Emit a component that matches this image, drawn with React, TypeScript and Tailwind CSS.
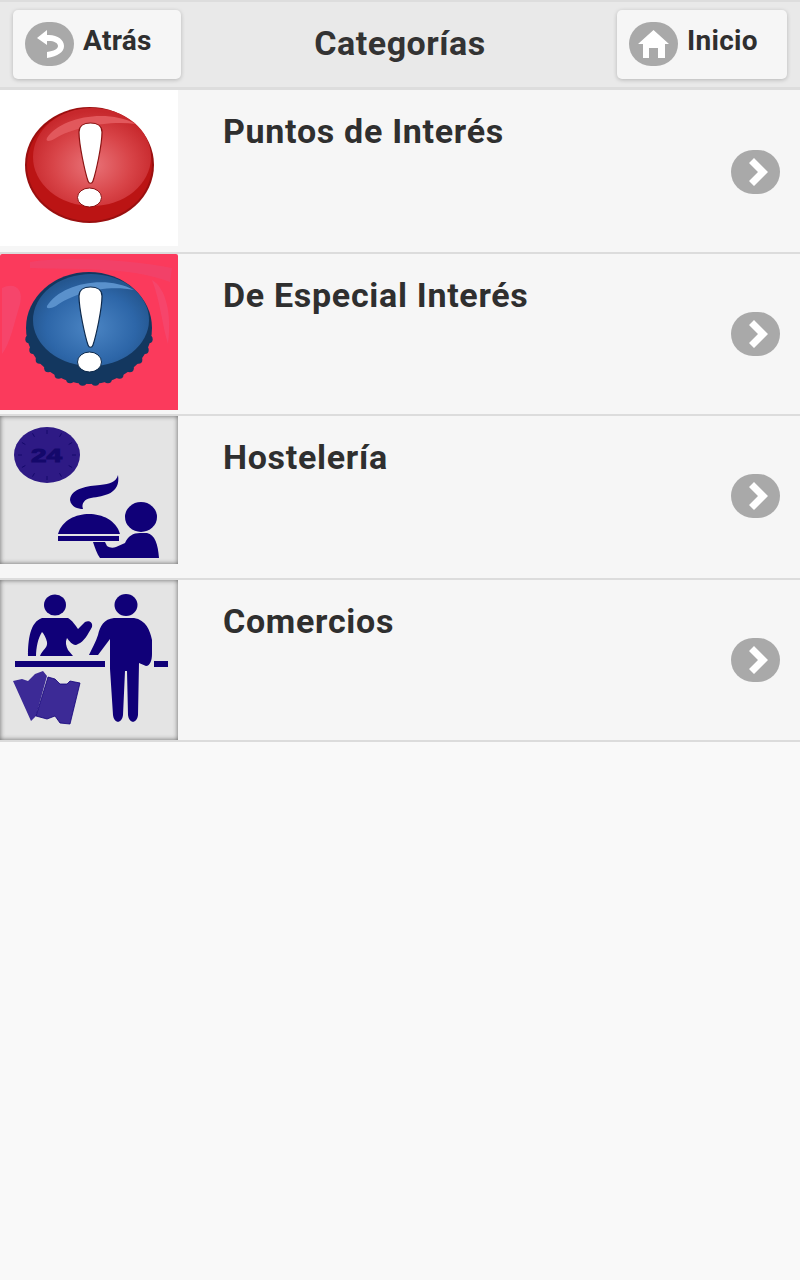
const FONT = "font-['Roboto',sans-serif]"

function RoundIcon({ children }: { children: React.ReactNode }) {
  return (
    <div className="w-[49px] h-[44px] shrink-0 rounded-full bg-[#a9a9a9] flex items-center justify-center">
      <svg viewBox="0 0 49 44" className="w-[49px] h-[44px]">
        {children}
      </svg>
    </div>
  )
}

function HeaderButton({ label, width, icon }: { label: string; width: string; icon: React.ReactNode }) {
  return (
    <button className={`${width} h-[69px] rounded-[5px] bg-[#f6f6f6] shadow-[0_1px_4px_rgba(0,0,0,0.22)] flex items-start gap-[9px] pl-[12px] pt-[12px]`}>
      {icon}
      <span className="text-[28px] leading-[38px] tracking-[0.3px] font-bold text-[#2f2f2f]">{label}</span>
    </button>
  )
}

function Exclaim({ stroke }: { stroke: string }) {
  return (
    <path d="M79 42 C79 36 84 33 90.5 33 C97 33 102 36 102 42 C102 55 96 82 93 91 C92 94 89 94 88 91 C85 82 79 55 79 42 Z" fill="#fff" stroke={stroke} strokeWidth="1.2" />
  )
}

function RedAlert() {
  return (
    <svg viewBox="0 0 178 156" className="w-[178px] h-[156px] block bg-white">
      <defs>
        <radialGradient id="redFace" cx="50%" cy="58%" r="55%">
          <stop offset="0%" stopColor="#e97378" />
          <stop offset="60%" stopColor="#d84448" />
          <stop offset="100%" stopColor="#c7282c" />
        </radialGradient>
      </defs>
      <ellipse cx="89.5" cy="75" rx="64.5" ry="58" fill="#9a0f0f" />
      <ellipse cx="89.5" cy="75" rx="62.5" ry="56" fill="#bb1414" />
      <ellipse cx="92" cy="67" rx="59" ry="49" fill="url(#redFace)" />
      <path d="M47 48 C60 28 105 18 136 34 C108 30 72 38 56 48 C50 52 45 52 47 48 Z" fill="#e2585c" />
      <Exclaim stroke="#8a1212" />
      <ellipse cx="89.5" cy="107.5" rx="12" ry="9.5" fill="#fff" stroke="#8a1212" strokeWidth="1" />
    </svg>
  )
}

function BlueAlert() {
  // scalloped rim along the lower half of the cap
  const teeth = [12, 24, 36, 48, 60, 72, 84, 96, 108, 120, 132, 144, 156, 168]
  return (
    <svg viewBox="0 0 178 156" className="w-[178px] h-[156px] block bg-[#fb3a5c] rounded-t-[2px]">
      <defs>
        <radialGradient id="blueFace" cx="50%" cy="58%" r="55%">
          <stop offset="0%" stopColor="#4b85c4" />
          <stop offset="70%" stopColor="#2d66a8" />
          <stop offset="100%" stopColor="#24568f" />
        </radialGradient>
      </defs>
      <path d="M30 8 C70 2 130 6 172 14 L170 28 C130 12 70 16 30 14 Z" fill="#f0446c" opacity="0.8" />
      <path d="M2 34 C14 28 24 34 20 50 C14 70 10 90 2 100 Z" fill="#f44a72" opacity="0.7" />
      <path d="M152 26 C166 34 172 60 168 90 C162 70 160 46 152 26 Z" fill="#f44a72" opacity="0.7" />
      {teeth.map(a => {
        const rad = (a * Math.PI) / 180
        return <circle key={a} cx={89 + 61 * Math.cos(rad)} cy={74 + 54 * Math.sin(rad)} r="4" fill="#13375f" />
      })}
      <ellipse cx="89" cy="74" rx="63" ry="56" fill="#13375f" />
      <ellipse cx="91" cy="66" rx="58" ry="46" fill="url(#blueFace)" />
      <path d="M47 52 C60 30 105 20 134 36 C105 30 72 40 56 52 C50 55 46 55 47 52 Z" fill="#5a91cc" />
      <Exclaim stroke="#0e2a4c" />
      <ellipse cx="89.5" cy="108" rx="12" ry="10" fill="#fff" stroke="#0e2a4c" strokeWidth="1" />
    </svg>
  )
}

function Hostel() {
  const ticks = [0, 30, 60, 90, 120, 150, 180, 210, 240, 270, 300, 330]
  return (
    <div className="w-[178px] h-[148px] bg-[#e4e4e4] shadow-[inset_0_0_5px_#666]">
      <svg viewBox="0 0 178 148" className="w-[178px] h-[148px] block">
        <ellipse cx="47" cy="39" rx="33" ry="28" fill="#2e1a85" />
        {ticks.map(a => {
          const rad = (a * Math.PI) / 180
          const c = Math.cos(rad)
          const s = Math.sin(rad)
          return <line key={a} x1={47 + 25 * c} y1={39 + 21 * s} x2={47 + 29 * c} y2={39 + 25 * s} stroke="#14086b" strokeWidth="1" />
        })}
        <text x="31" y="46" textLength="31" lengthAdjust="spacingAndGlyphs" fontSize="19" fontWeight="700" fontFamily="Liberation Sans, sans-serif" fill="#14086b" stroke="#14086b" strokeWidth="1">24</text>
        <path d="M118 59 C116 66 110 68 100 69 C88 70 71 72 70 84 C71 91 78 93 83 93 C81 87 85 83 91 82 C104 80 121 78 118 59 Z" fill="#100078" />
        <path d="M58 118 C62 104 76 98 89 98 C102 98 116 104 120 118 Z" fill="#100078" />
        <rect x="58" y="120" width="61" height="5" fill="#100078" />
        <ellipse cx="141" cy="101" rx="16" ry="15" fill="#100078" />
        <path d="M93 126 H105 L107 130 C110 132 113 132 116 131 L125 127 C128 120 133 117 140 117 H147 C155 119 158 128 159 142 H100 C97 138 95 132 93 126 Z" fill="#100078" />
      </svg>
    </div>
  )
}

function Shops() {
  return (
    <div className="w-[178px] h-[160px] bg-[#e4e4e4] shadow-[inset_0_0_5px_#666]">
      <svg viewBox="0 0 178 160" className="w-[178px] h-[160px] block">
        <ellipse cx="55" cy="25" rx="11" ry="10.5" fill="#100078" />
        <ellipse cx="126" cy="25" rx="11.5" ry="11" fill="#100078" />
        <path d="M28 76 C28 60 30 42 42 38 H68 C72 40 76 46 78 49 L85 42 C90 40 93 43 92 47 C88 54 84 62 78 64 C74 67 70 62 67 58 C65 62 66 66 68 70 L73 76 H40 C42 70 48 68 47 62 C46 58 44 54 42 52 C38 58 36 68 36 76 Z" fill="#100078" />
        <rect x="15" y="81" width="90" height="6" fill="#100078" />
        <rect x="154" y="81" width="14" height="6" fill="#100078" />
        <path d="M89 75 C92 68 96 62 98 55 C100 46 104 39 114 38 H134 C146 40 150 50 152 60 V74 C152 80 150 86 146 86 L139 83 L138 135 C137 144 129 144 128 135 L127 91 H125 L123 135 C122 144 114 144 113 135 L110 89 V59 L98 75 Z" fill="#100078" />
        <path d="M13 101 L22 99 L28 101 L35 94 L43 91 L47 96 L36 136 L31 141 Z" fill="#3c2a96" />
        <path d="M48 97 L55 99 L60 104 H67 L70 101 L80 103 L70 144 L60 143 L55 136 L47 139 L36 136 Z" fill="#3c2a96" stroke="#100078" strokeWidth="0.8" />
      </svg>
    </div>
  )
}

const rows = [
  { title: 'Puntos de Interés', height: 'h-[162px]', arrow: 'mt-[2px]', image: <RedAlert /> },
  { title: 'De Especial Interés', height: 'h-[160px]', arrow: '', image: <BlueAlert /> },
  { title: 'Hostelería', height: 'h-[162px]', arrow: 'mb-[2px]', image: <Hostel /> },
  { title: 'Comercios', height: 'h-[160px]', arrow: '', image: <Shops /> },
]

export default function App() {
  return (
    <div className={`${FONT} w-[800px] h-[1280px] bg-[#f9f9f9] overflow-hidden`}>
      <header className="h-[90px] bg-[#e9e9e9] border-t-2 border-b-[3px] border-[#dddddd] flex items-start justify-between pl-[13px] pr-[13px] pt-[8px]">
        <HeaderButton
          label="Atrás"
          width="w-[168px]"
          icon={
            <RoundIcon>
              <path d="M12 16 L22 8 V13 H24 C33 13 39 18 39 24 C39 30 33 34 22 36 V30 C29 29 33 27 33 24 C33 21 29 19 24 19 H22 V23 Z" fill="#fff" />
            </RoundIcon>
          }
        />
        <h1 className="pl-[2px] text-[34px] leading-[67px] tracking-[0.5px] font-bold text-[#333333]">Categorías</h1>
        <HeaderButton
          label="Inicio"
          width="w-[170px]"
          icon={
            <RoundIcon>
              <path d="M24.5 8 L40 22 H36 V36 H29 V26 H20 V36 H14 V22 H9 Z" fill="#fff" />
            </RoundIcon>
          }
        />
      </header>
      {rows.map(row => (
        <div key={row.title} className={`${row.height} box-content bg-[#f6f6f6] border-b-2 border-[#dcdcdc] flex items-center pr-[20px]`}>
          <div className="w-[178px] self-start shrink-0">{row.image}</div>
          <div className="flex-1 self-start pl-[45px] pt-[20px] text-[34px] leading-[42px] tracking-[0.7px] font-bold text-[#2f2f2f]">{row.title}</div>
          <div className={row.arrow}>
            <RoundIcon>
              <path d="M18 13 L23 8 L37 22 L23 36 L18 31 L27 22 Z" fill="#fff" />
            </RoundIcon>
          </div>
        </div>
      ))}
    </div>
  )
}
